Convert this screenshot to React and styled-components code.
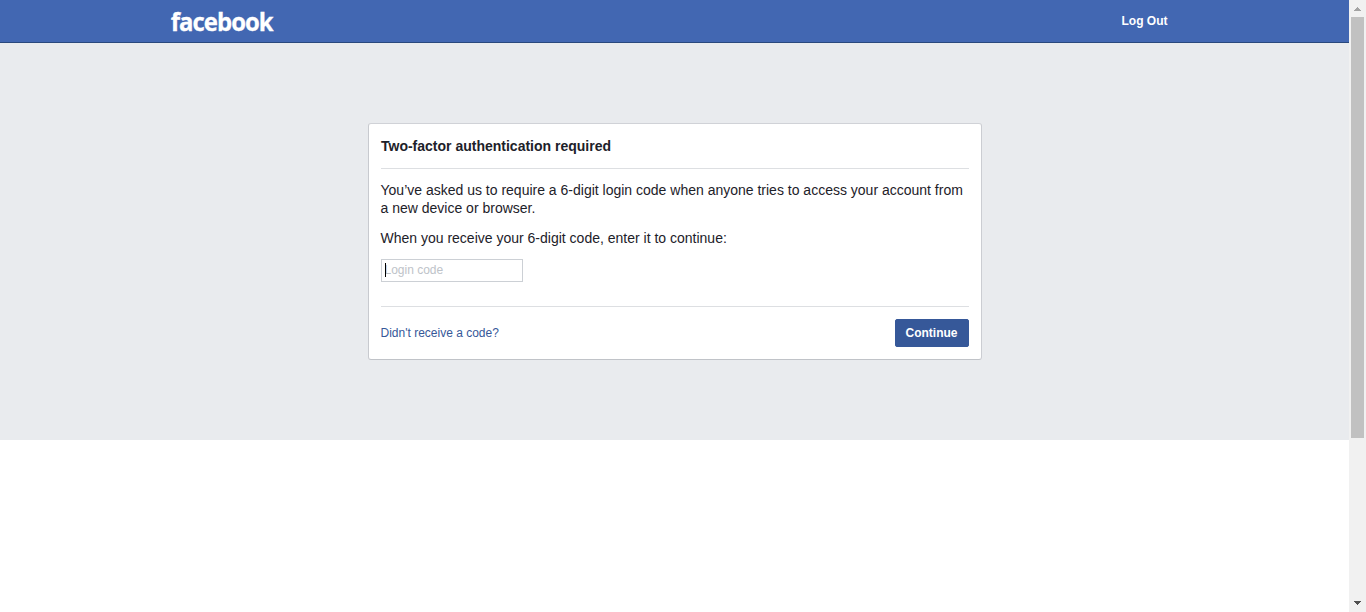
import React from 'react';
import styled, { createGlobalStyle } from 'styled-components';

const GlobalStyle = createGlobalStyle`
  * { box-sizing: border-box; }
  body {
    margin: 0;
    overflow: hidden;
    background: #fff;
    color: #1d2129;
    font-family: "Liberation Sans", Arial, sans-serif;
  }
`;

const Window = styled.div`
  display: flex;
  height: 612px;
`;

const Page = styled.div`
  flex: 1;
  min-width: 0;
`;

const Header = styled.header`
  height: 43px;
  padding: 0 181.5px 0 170px;
  display: flex;
  align-items: center;
  justify-content: space-between;
  background: #4267b2;
  border-bottom: 1px solid #29487d;
`;

const Logo = styled.svg`
  display: block;
  width: 120px;
  height: 42px;
  overflow: visible;

  text {
    font-family: "Open Sans", "Noto Sans", sans-serif;
    font-size: 25px;
    font-weight: 700;
    letter-spacing: -1px;
    fill: #fff;
    stroke: #fff;
    stroke-width: 0.3px;
  }
`;

const LogOut = styled.a`
  color: #fff;
  font-size: 12px;
  font-weight: 700;
  line-height: 16px;
`;

const Main = styled.main`
  height: 397px;
  padding-top: 80px;
  background: #e9ebee;
`;

const Card = styled.section`
  width: 614px;
  height: 237px;
  margin: 0 auto 0 368px;
  padding: 0 12px;
  display: flex;
  flex-direction: column;
  background: #fff;
  border: 1px solid;
  border-color: #d0d2d7 #cbcdd2 #c0c3c8 #c8cacf;
  border-radius: 3px;
`;

const Title = styled.h1`
  height: 45px;
  margin: 0;
  font-size: 14px;
  font-weight: 700;
  line-height: 44px;
  border-bottom: 1px solid #dddfe2;
`;

const Content = styled.div`
  flex: 1;
  padding-top: 12px;
`;

const Paragraph = styled.p`
  margin: 0 0 12px -0.5px;
  font-size: 14px;
  line-height: 18px;
  white-space: nowrap;
`;

const CodeField = styled.div`
  width: 142px;
  height: 23px;
  padding: 0 3px 2px;
  display: flex;
  align-items: center;
  border: 1px solid #ccd0d5;
  color: #bec3c9;
  font-size: 12px;
  line-height: 16px;
`;

const Placeholder = styled.span`
  margin-left: -0.5px;
`;

const Caret = styled.span`
  width: 1px;
  height: 14px;
  margin-right: -1px;
  z-index: 1;
  background: #000;
`;

const Footer = styled.footer`
  height: 53px;
  display: flex;
  align-items: center;
  justify-content: space-between;
  border-top: 1px solid #dddfe2;
`;

const HelpLink = styled.a`
  margin-left: -0.5px;
  color: #365899;
  font-size: 12px;
`;

const Button = styled.button`
  width: 74px;
  height: 28px;
  padding: 0 1px 0 0;
  border: 1px solid #365899;
  border-radius: 2px;
  background: #365899;
  color: #fff;
  font: 700 12px/26px "Liberation Sans", Arial, sans-serif;
`;

const Scrollbar = styled.aside`
  width: 17px;
  display: flex;
  flex-direction: column;
  align-items: center;
  justify-content: space-between;
  background: #f1f1f1;
`;

const Thumb = styled.div`
  width: 13px;
  height: 421px;
  margin-bottom: auto;
  background: #c1c1c1;
`;

const Arrow = styled.svg`
  display: block;
  width: 17px;
  height: 17px;
  fill: ${({ $color }) => $color};
`;

export default function App() {
  return (
    <>
      <GlobalStyle />
      <Window>
        <Page>
          <Header>
            <Logo role="img" aria-label="facebook">
              <text x="0.7" y="30.8" textLength="102" lengthAdjust="spacingAndGlyphs">facebook</text>
            </Logo>
            <LogOut>Log Out</LogOut>
          </Header>
          <Main>
            <Card>
              <Title>Two-factor authentication required</Title>
              <Content>
                <Paragraph>
                  You’ve asked us to require a 6-digit login code when anyone tries to access your account from
                  <br />
                  a new device or browser.
                </Paragraph>
                <Paragraph>When you receive your 6-digit code, enter it to continue:</Paragraph>
                <CodeField>
                  <Caret />
                  <Placeholder>Login code</Placeholder>
                </CodeField>
              </Content>
              <Footer>
                <HelpLink>Didn't receive a code?</HelpLink>
                <Button>Continue</Button>
              </Footer>
            </Card>
          </Main>
        </Page>
        <Scrollbar>
          <Arrow $color="#a3a3a3" shapeRendering="crispEdges">
            <path d="M8 7h1v1h1v1h1v1h1v1H5v-1h1V9h1V8h1z" />
          </Arrow>
          <Thumb />
          <Arrow $color="#505050" shapeRendering="crispEdges">
            <path d="M5 6h7v1h-1v1h-1v1H9v1H8V9H7V8H6V7H5z" />
          </Arrow>
        </Scrollbar>
      </Window>
    </>
  );
}
